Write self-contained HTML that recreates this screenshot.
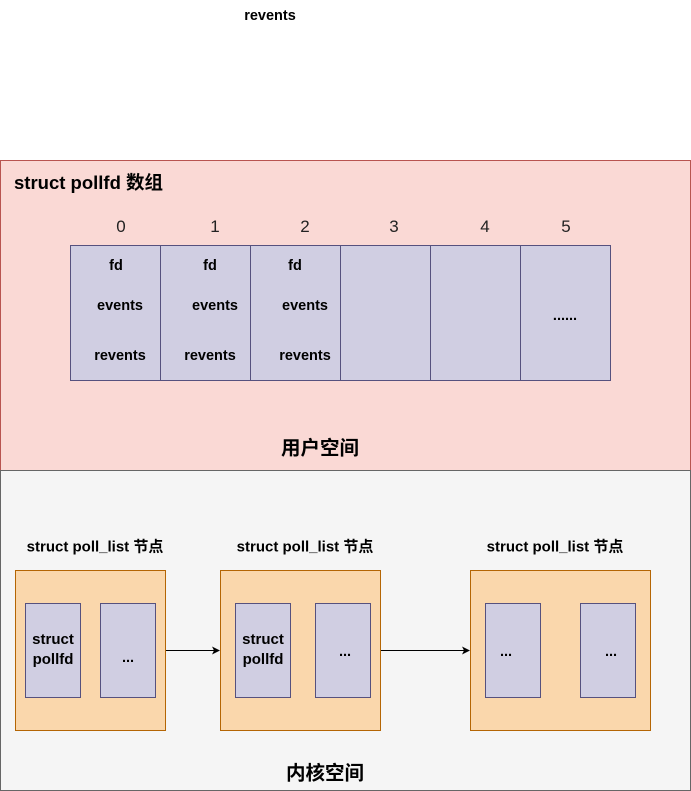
<!DOCTYPE html>
<html><head><meta charset="utf-8"><style>
html,body{margin:0;padding:0;background:#fff;width:691px;height:791px;overflow:hidden;position:relative;font-family:"Liberation Sans","Noto Sans CJK SC",sans-serif;color:#000}
.a{position:absolute;box-sizing:border-box}
.t{position:absolute;white-space:nowrap;font-size:14.5px;font-weight:bold;transform:translate(-50%,-50%)}
.l{font-size:15px}
.n{position:absolute;font-size:17px;transform:translate(-50%,-50%);color:#222}
.c{position:absolute;box-sizing:border-box;background:#d0cee2;border:1px solid #56517e}
.o{position:absolute;box-sizing:border-box;background:#fad7ac;border:1px solid #b46504}
</style></head><body>
<div class="t" style="left:270px;top:16px">revents</div>

<div class="a" style="left:0;top:160px;width:691px;height:311px;background:#fad9d5;border:1px solid #b85450"></div>
<div class="t" style="left:14px;top:182px;transform:translate(0,-50%);font-size:18.5px">struct pollfd 数组</div>

<div class="n" style="left:121px;top:227px">0</div>
<div class="n" style="left:215px;top:227px">1</div>
<div class="n" style="left:305px;top:227px">2</div>
<div class="n" style="left:394px;top:227px">3</div>
<div class="n" style="left:485px;top:227px">4</div>
<div class="n" style="left:566px;top:227px">5</div>

<div class="c" style="left:70px;top:245px;width:91px;height:136px"></div>
<div class="c" style="left:160px;top:245px;width:91px;height:136px"></div>
<div class="c" style="left:250px;top:245px;width:91px;height:136px"></div>
<div class="c" style="left:340px;top:245px;width:91px;height:136px"></div>
<div class="c" style="left:430px;top:245px;width:91px;height:136px"></div>
<div class="c" style="left:520px;top:245px;width:91px;height:136px"></div>

<div class="t" style="left:116px;top:266px">fd</div>
<div class="t" style="left:120px;top:306px">events</div>
<div class="t" style="left:120px;top:356px">revents</div>
<div class="t" style="left:210px;top:266px">fd</div>
<div class="t" style="left:215px;top:306px">events</div>
<div class="t" style="left:210px;top:356px">revents</div>
<div class="t" style="left:295px;top:266px">fd</div>
<div class="t" style="left:305px;top:306px">events</div>
<div class="t" style="left:305px;top:356px">revents</div>
<div class="t" style="left:565px;top:316px">......</div>

<div class="t" style="left:320px;top:446px;font-size:19.5px">用户空间</div>

<div class="a" style="left:0;top:470px;width:691px;height:321px;background:#f5f5f5;border:1px solid #666"></div>

<div class="t l" style="left:95px;top:546px">struct poll_list 节点</div>
<div class="t l" style="left:305px;top:546px">struct poll_list 节点</div>
<div class="t l" style="left:555px;top:546px">struct poll_list 节点</div>

<div class="o" style="left:15px;top:570px;width:151px;height:161px"></div>
<div class="o" style="left:220px;top:570px;width:161px;height:161px"></div>
<div class="o" style="left:470px;top:570px;width:181px;height:161px"></div>

<div class="c" style="left:25px;top:603px;width:56px;height:95px"></div>
<div class="c" style="left:100px;top:603px;width:56px;height:95px"></div>
<div class="c" style="left:235px;top:603px;width:56px;height:95px"></div>
<div class="c" style="left:315px;top:603px;width:56px;height:95px"></div>
<div class="c" style="left:485px;top:603px;width:56px;height:95px"></div>
<div class="c" style="left:580px;top:603px;width:56px;height:95px"></div>

<div class="t l" style="left:53px;top:650px;white-space:normal;text-align:center;line-height:20px;width:50px">struct pollfd</div>
<div class="t" style="left:128px;top:658px">...</div>
<div class="t l" style="left:263px;top:650px;white-space:normal;text-align:center;line-height:20px;width:50px">struct pollfd</div>
<div class="t" style="left:345px;top:652px">...</div>
<div class="t" style="left:506px;top:652px">...</div>
<div class="t" style="left:611px;top:652px">...</div>

<svg class="a" style="left:0;top:0" width="691" height="791">
<line x1="166" y1="650.5" x2="214" y2="650.5" stroke="#000" stroke-width="1"/>
<path d="M220 650.5 L212 646.5 L214 650.5 L212 654.5 Z" fill="#000"/>
<line x1="381" y1="650.5" x2="464" y2="650.5" stroke="#000" stroke-width="1"/>
<path d="M470 650.5 L462 646.5 L464 650.5 L462 654.5 Z" fill="#000"/>
</svg>

<div class="t" style="left:325px;top:771px;font-size:19.5px">内核空间</div>
</body></html>
